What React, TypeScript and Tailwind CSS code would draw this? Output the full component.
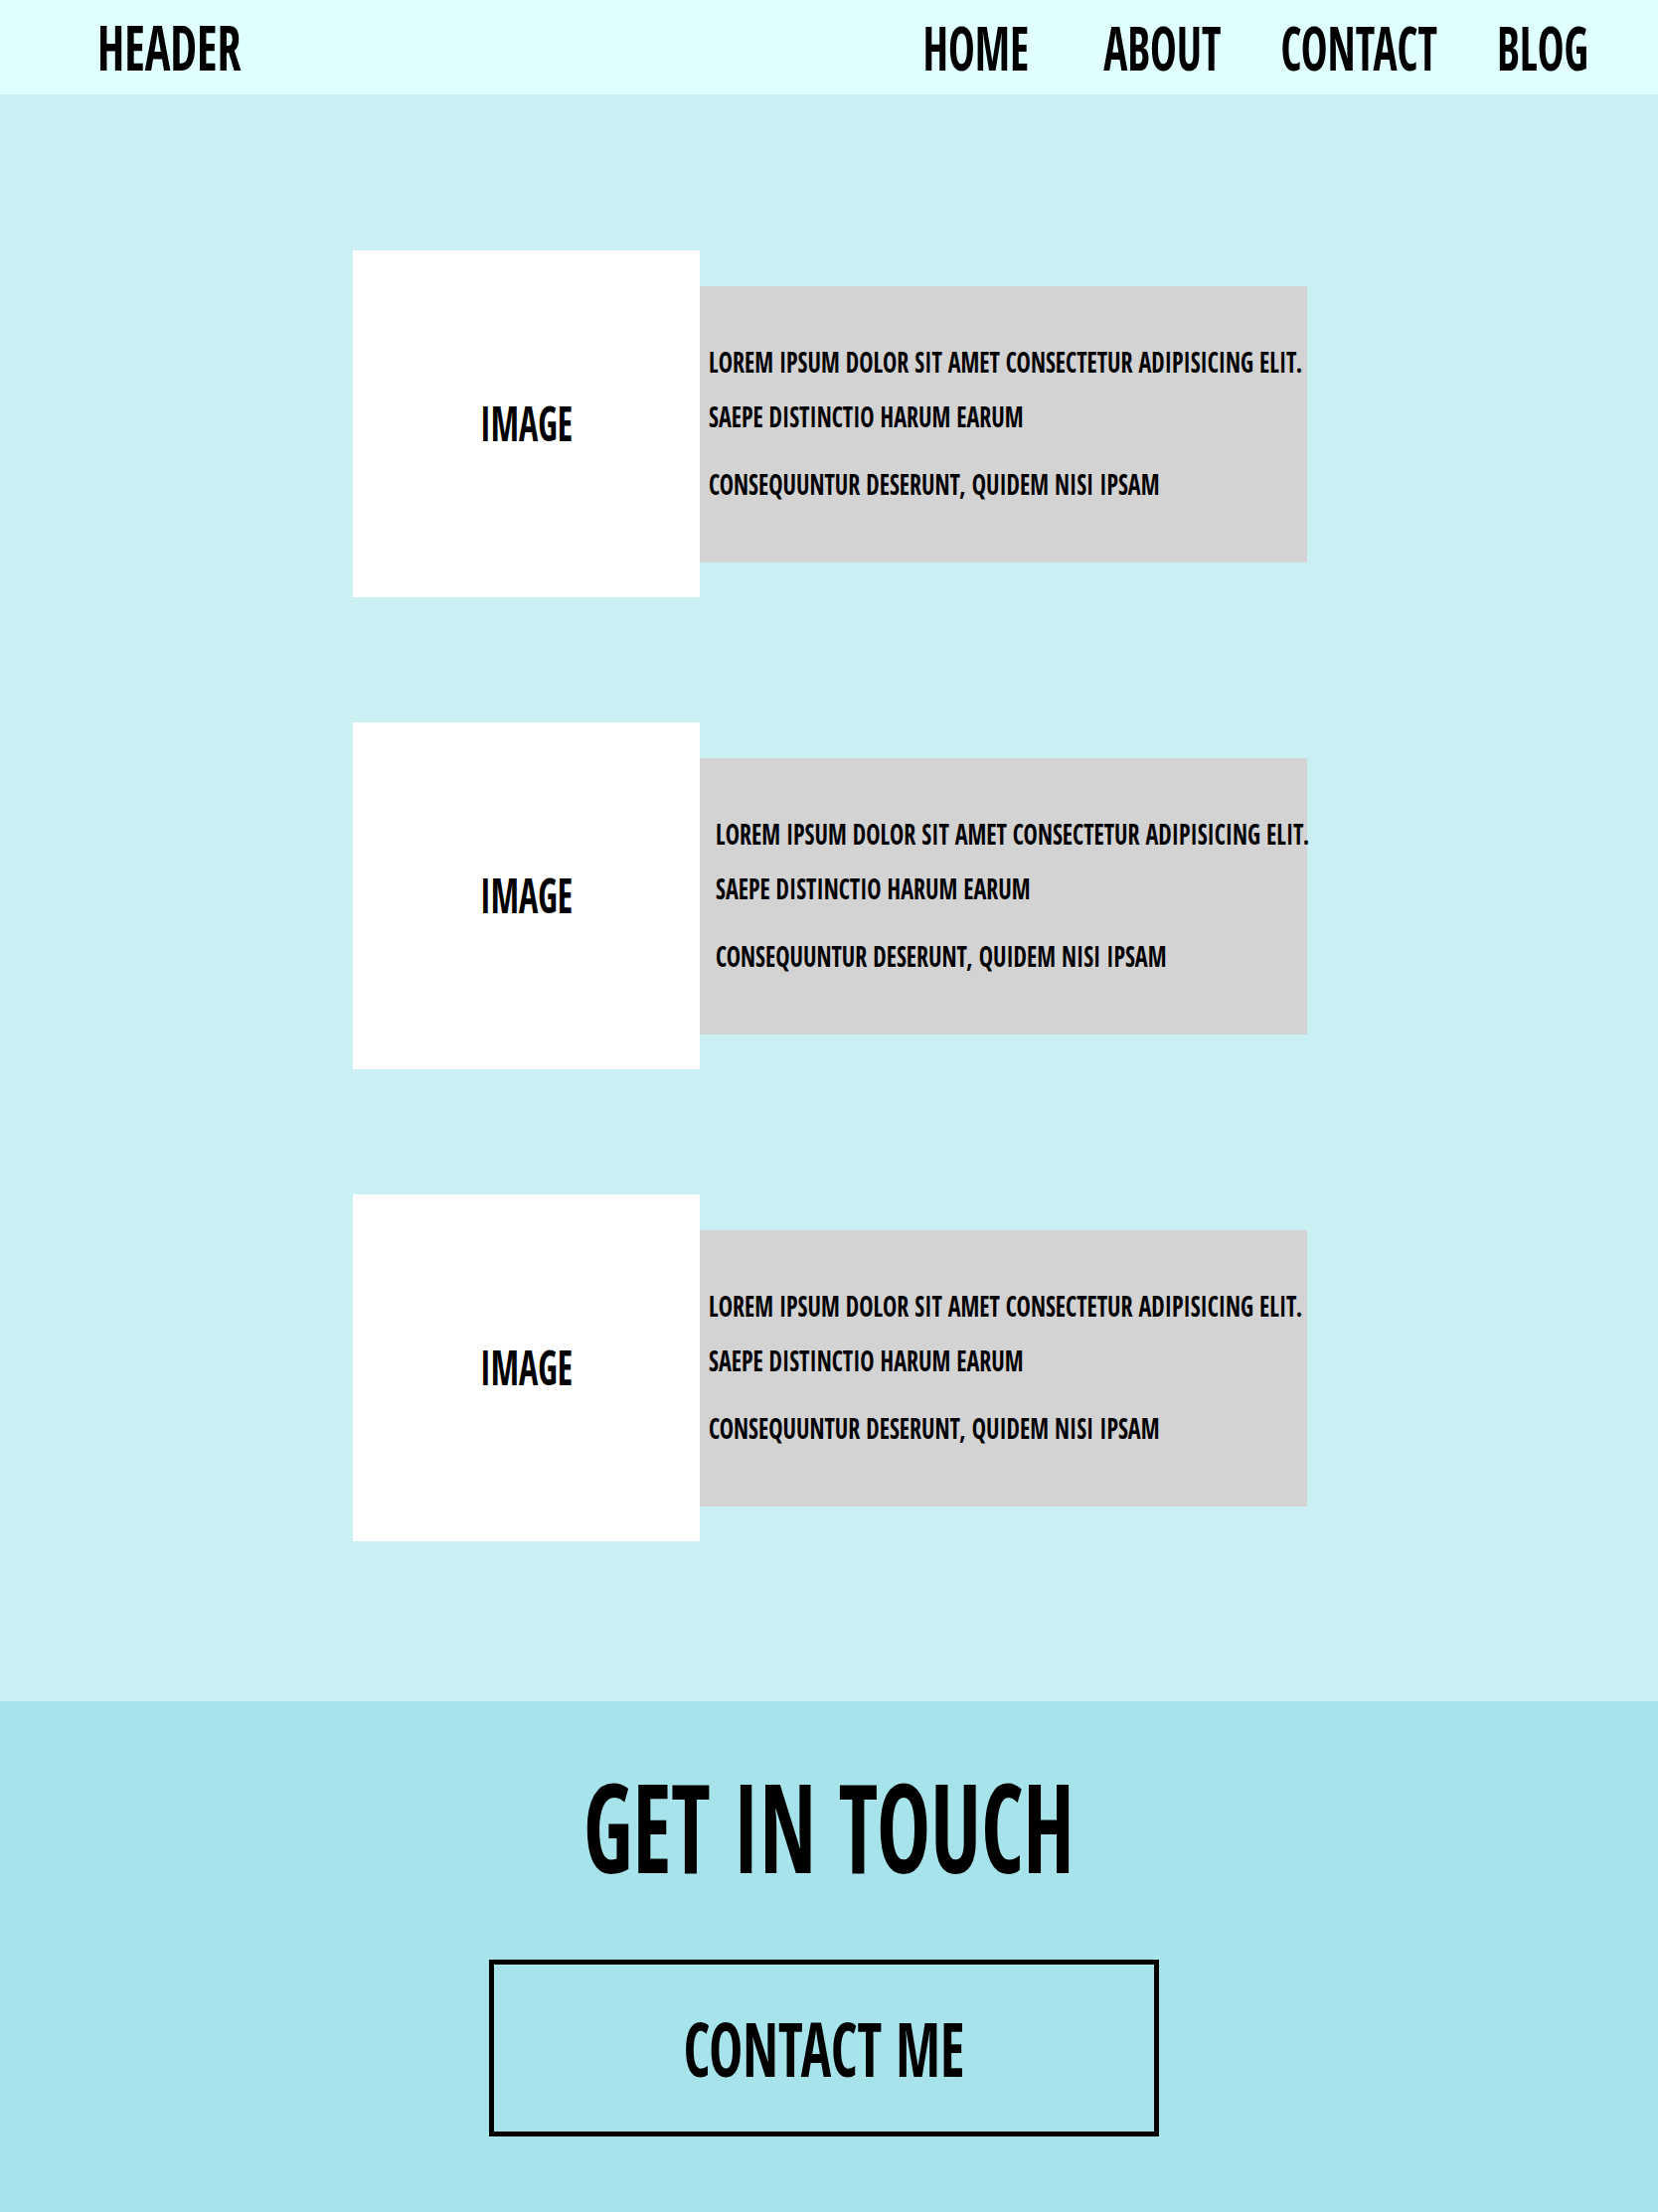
import React from 'react';

// Bebas-like look: condensed bold face, stretched a bit taller
const Tall = ({ children, className = 'scale-y-[1.33]' }: { children: React.ReactNode; className?: string }) => (
  <span className={`inline-block ${className}`}>{children}</span>
);

const navLinks = ['Home', 'About', 'Contact', 'Blog'];

const lines = [
  'Lorem ipsum dolor sit amet consectetur adipisicing elit.',
  'Saepe distinctio harum earum',
  'Consequuntur deserunt, quidem nisi ipsam',
];

const Card = ({ shift }: { shift?: boolean }) => (
  <div className="flex items-center w-[960px] ml-[2px]">
    <div className="w-[349px] h-[349px] bg-white flex items-center justify-center shrink-0">
      <Tall className="text-[36px] leading-none scale-y-[1.33]">Image</Tall>
    </div>
    <div className={`w-[611px] h-[278px] bg-[#d3d3d3] pt-[48px] ${shift ? 'pl-[16px]' : 'pl-[9px]'}`}>
      {lines.map((line, i) => (
        <div
          key={i}
          className={`text-[24px] h-[55px] leading-[55px] whitespace-nowrap ${i === 2 ? 'mt-[13px]' : ''}`}
        >
          <Tall className="scale-y-[1.22]">{line}</Tall>
        </div>
      ))}
    </div>
  </div>
);

export default function App() {
  return (
    <div className="min-h-screen font-['Open_Sans_Condensed','Roboto_Condensed',sans-serif] font-bold uppercase text-black">
      <header className="h-[95px] bg-[#e0ffff] flex items-center justify-between pl-[98px] pr-[70px]">
        <Tall className="text-[48px] leading-none scale-y-[1.3]">Header</Tall>
        <nav className="flex items-center gap-[60px]">
          {navLinks.map((link, i) => (
            <a key={link} href="#" className={i === 0 ? 'mr-[15px]' : ''}>
              <Tall className="text-[45px] leading-none scale-y-[1.36]">{link}</Tall>
            </a>
          ))}
        </nav>
      </header>

      <main className="bg-[#caf0f3] pt-[157px] pb-[161px] flex flex-col items-center gap-[126px]">
        <Card />
        <Card shift />
        <Card />
      </main>

      <footer className="bg-[#a6e3ea] h-[514px] pt-[55px] flex flex-col items-center">
        <h2 className="h-[140px] leading-[140px] text-[91px]">
          <Tall className="scale-y-[1.36]">Get in touch</Tall>
        </h2>
        <button className="mt-[65px] mr-[10px] w-[674px] h-[178px] border-[5px] border-black flex items-center justify-center uppercase">
          <Tall className="text-[57px] leading-none scale-y-[1.33]">Contact me</Tall>
        </button>
      </footer>
    </div>
  );
}
